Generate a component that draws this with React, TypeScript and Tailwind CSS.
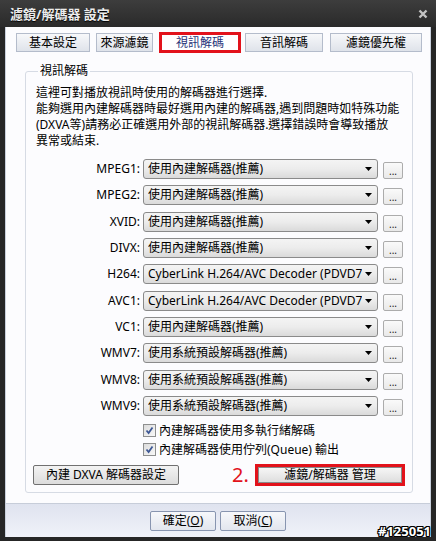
import React from "react";

const FONT = { fontFamily: '"Noto Sans", "Noto Sans CJK TC", sans-serif' };

const rows: [string, string][] = [
  ["MPEG1:", "使用內建解碼器(推薦)"],
  ["MPEG2:", "使用內建解碼器(推薦)"],
  ["XVID:", "使用內建解碼器(推薦)"],
  ["DIVX:", "使用內建解碼器(推薦)"],
  ["H264:", "CyberLink H.264/AVC Decoder (PDVD7"],
  ["AVC1:", "CyberLink H.264/AVC Decoder (PDVD7"],
  ["VC1:", "使用內建解碼器(推薦)"],
  ["WMV7:", "使用系統預設解碼器(推薦)"],
  ["WMV8:", "使用系統預設解碼器(推薦)"],
  ["WMV9:", "使用系統預設解碼器(推薦)"],
];

function Tab({ label, w, ml }: { label: string; w: string; ml: string }) {
  return (
    <div
      className={`${w} ${ml} h-[19px] flex items-center justify-center border border-[#b4bccb] bg-gradient-to-b from-[#f7f8fa] to-[#dfe3ea] text-[12px] leading-[16px] text-black`}
    >
      {label}
    </div>
  );
}

function Check({ label }: { label: string }) {
  return (
    <div className="flex items-center h-[16px] ml-[110px]">
      <div className="w-[13px] h-[13px] border border-[#8e8f8f] bg-gradient-to-br from-[#dcdcdc] to-[#f8f8f8] flex items-center justify-center">
        <svg width="9" height="9" viewBox="0 0 9 9">
          <path d="M1.5 4.5 L3.6 7 L7.5 1.5" stroke="#3d5794" strokeWidth="1.8" fill="none" />
        </svg>
      </div>
      <span className="ml-[3px] text-[12px] leading-[16px]">{label}</span>
    </div>
  );
}

export default function App() {
  return (
    <div
      className="w-[436px] h-[541px] bg-[#262626] flex flex-col relative overflow-hidden text-black"
      style={FONT}
    >
      {/* title bar */}
      <div className="h-[27px] flex items-center justify-between pl-[10px] pr-[8px] bg-gradient-to-b from-[#3d3d3d] to-[#2a2a2a]">
        <span className="text-[13px] font-bold text-[#ececec] leading-[16px] [text-shadow:0_1px_1px_#000]">
          濾鏡/解碼器 設定
        </span>
        <svg width="10" height="10" viewBox="0 0 10 10">
          <path d="M1.5 1.5 L8.5 8.5 M8.5 1.5 L1.5 8.5" stroke="#c4c4c4" strokeWidth="2.4" />
        </svg>
      </div>

      {/* client */}
      <div className="mx-[5px] h-[510px] flex flex-col bg-[#fcfcfe] border-x border-[#c9d0dc]">
        {/* tab strip */}
        <div className="mt-[5px] h-[21px] flex items-center">
          <Tab label="基本設定" w="w-[74px]" ml="ml-[10px]" />
          <Tab label="來源濾鏡" w="w-[57px]" ml="ml-[6px]" />
          <div className="ml-[6px] w-[82px] h-[21px] border-[3px] border-[#e2121b] bg-white flex items-center justify-center text-[12px] leading-[15px] text-[#2a3479]">
            視訊解碼
          </div>
          <Tab label="音訊解碼" w="w-[78px]" ml="ml-[4px]" />
          <Tab label="濾鏡優先權" w="w-[92px]" ml="ml-[7px]" />
        </div>

        {/* panel */}
        <div className="flex-1">
          <fieldset className="mt-[11px] ml-[19px] w-[388px] border border-[#d6dbe4] rounded-[3px] pl-[7px] pt-[7px] pb-[6px]">
            <legend className="ml-[5px] px-[2px] text-[12px] leading-[14px]">視訊解碼</legend>
            <div className="pl-[3px] text-[12px] leading-[16px]">
              這裡可對播放視訊時使用的解碼器進行選擇.
              <br />
              能夠選用內建解碼器時最好選用內建的解碼器,遇到問題時如特殊功能
              <br />
              (DXVA等)請務必正確選用外部的視訊解碼器.選擇錯誤時會導致播放
              <br />
              異常或結束.
            </div>

            <div className="mt-[10px] flex flex-col gap-[6.33px]">
              {rows.map(([label, value]) => (
                <div key={label} className="flex items-end h-[20px]">
                  <div className="w-[107px] self-center text-right text-[12px] leading-[16px]">{label}</div>
                  <div className="ml-[3px] w-[235px] h-[20px] rounded-[3px] border border-[#8a8a8a] bg-gradient-to-b from-[#f4f4f4] via-[#ececec] to-[#dadada] flex items-center pl-[4px] pr-[5px]">
                    <span className="flex-1 min-w-0 text-[12px] leading-[16px] whitespace-nowrap overflow-hidden">{value}</span>
                    <svg width="7" height="4" viewBox="0 0 7 4" className="ml-[3px] shrink-0">
                      <path d="M0 0 H7 L3.5 4 Z" fill="#000" />
                    </svg>
                  </div>
                  <div className="ml-[5px] w-[20px] h-[17px] rounded-[2px] border border-[#acacac] bg-gradient-to-b from-[#fafafa] to-[#e9e9e9] flex items-end justify-center text-[10px] leading-[13px] text-[#222]">
                    ...
                  </div>
                </div>
              ))}
            </div>

            <div className="mt-[7px] flex flex-col gap-[3px]">
              <Check label="內建解碼器使用多執行緒解碼" />
              <Check label="內建解碼器使用佇列(Queue) 輸出" />
            </div>

            <div className="mt-[6px] flex items-center h-[22px]">
              <div className="w-[146px] h-[20px] rounded-[2px] border border-[#707070] bg-gradient-to-b from-[#f3f3f3] to-[#dcdcdc] flex items-center justify-center text-[12px] leading-[16px]">
                內建 DXVA 解碼器設定
              </div>
              <span className="ml-[53px] w-[16px] text-[20px] leading-[22px] text-[#e2121b]">2.</span>
              <div className="ml-[7px] w-[150px] h-[22px] border-[3px] border-[#e2121b]">
                <div className="w-full h-full border border-[#8a8a8a] bg-gradient-to-b from-[#f6f6f6] to-[#dedede] flex items-center justify-center text-[12px] leading-[14px]">
                  濾鏡/解碼器 管理
                </div>
              </div>
            </div>
          </fieldset>
        </div>

        {/* bottom bar */}
        <div className="h-[34px] border-t border-[#c7cdd9] bg-gradient-to-b from-[#dfe3ef] to-[#f0f2f9] flex items-center justify-center gap-[4px]">
          <div className="w-[66px] h-[20px] rounded-[2px] border border-[#8895b0] bg-gradient-to-b from-[#f7f8fb] to-[#e2e6ee] flex items-center justify-center text-[12px] leading-[16px]">
            確定(<span className="underline">O</span>)
          </div>
          <div className="w-[66px] h-[20px] rounded-[2px] border border-[#8895b0] bg-gradient-to-b from-[#f7f8fb] to-[#e2e6ee] flex items-center justify-center text-[12px] leading-[16px]">
            取消(<span className="underline">C</span>)
          </div>
        </div>
      </div>

      {/* watermark */}
      <div className="absolute right-[5px] bottom-[3px] text-[13px] font-bold text-white leading-[14px] [text-shadow:1px_0_0_#000,-1px_0_0_#000,0_1px_0_#000,0_-1px_0_#000,1px_1px_0_#000,-1px_-1px_0_#000,1px_-1px_0_#000,-1px_1px_0_#000]">
        #125051
      </div>
    </div>
  );
}
